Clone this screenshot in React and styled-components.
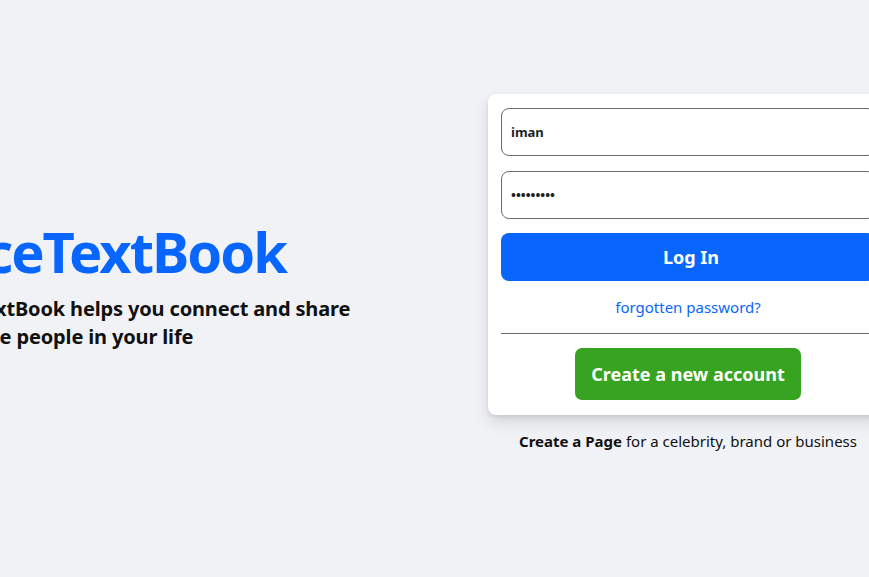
import React from 'react';
import styled, { createGlobalStyle } from 'styled-components';

const GlobalStyle = createGlobalStyle`
  html, body {
    margin: 0;
    padding: 0;
    background: #f0f2f5;
    font-family: "Noto Sans", "Open Sans", sans-serif;
    overflow: hidden;
  }
`;

const Page = styled.main`
  width: 100vw;
  height: 100vh;
  display: flex;
  justify-content: center;
  align-items: center;
  overflow: hidden;
`;

const Row = styled.div`
  flex: none;
  display: flex;
  align-items: center;
  gap: 30px;
  padding-right: 57px; /* keeps the card where the original sat */
`;

const Intro = styled.section`
  width: 534px;
  margin-top: -8px;
`;

const Brand = styled.h1`
  margin: 0 0 10px;
  color: #0866ff;
  font-size: 56px;
  font-weight: 700;
  line-height: 1.2;
  letter-spacing: -2px;
`;

const Tagline = styled.h2`
  margin: 0;
  width: 450px;
  padding-left: 5px;
  color: #111;
  font-size: 20px;
  font-weight: 700;
  line-height: 28px;
  letter-spacing: -0.15px;
`;

const Side = styled.div`
  display: flex;
  flex-direction: column;
  align-items: center;
  margin-top: -32px;
`;

const Card = styled.form`
  width: 400px;
  box-sizing: border-box;
  padding: 14px 13px 15px;
  background: #fff;
  border-radius: 8px;
  box-shadow: 0 2px 4px rgba(0, 0, 0, 0.1), 0 8px 16px rgba(0, 0, 0, 0.1);
  display: flex;
  flex-direction: column;
  align-items: center;
`;

const Input = styled.input`
  width: 100%;
  height: 48px;
  box-sizing: border-box;
  margin-bottom: 15px;
  padding: 0 9px;
  border: 1px solid #6b6b6b;
  border-radius: 8px;
  font-family: inherit;
  font-size: 13px;
  font-weight: 700;
  color: #1c1e21;
  background: #fff;
  outline: none;

  &:last-of-type {
    margin-bottom: 14px;
  }
`;

const Button = styled.button`
  border: none;
  border-radius: ${p => (p.$create ? '7px' : '8px')};
  background: ${p => (p.$create ? '#36a420' : '#0866ff')};
  color: #fff;
  font-family: inherit;
  font-weight: 700;
  cursor: pointer;
  width: ${p => (p.$create ? 'auto' : '100%')};
  height: ${p => (p.$create ? '52px' : '48px')};
  padding: ${p => (p.$create ? '0 16px' : '0 0 0 6px')};
  font-size: 18px;
`;

const Forgot = styled.a`
  margin: 15px 0 15px;
  color: #0866ff;
  font-size: 15px;
  line-height: 22px;
  text-decoration: none;
`;

const Divider = styled.hr`
  width: 100%;
  margin: 0 0 14px;
  border: none;
  border-top: 1px solid #6b6b6b;
`;

const PageNote = styled.p`
  margin: 16px 0 0;
  color: #111;
  font-size: 15px;

  & b {
    font-weight: 700;
  }
`;

export default function App() {
  return (
    <>
      <GlobalStyle />
      <Page>
        <Row>
          <Intro>
            <Brand>FaceTextBook</Brand>
            <Tagline>FaceTextBook helps you connect and share with the people in your life</Tagline>
          </Intro>
          <Side>
            <Card onSubmit={e => e.preventDefault()}>
              <Input type="text" defaultValue="iman" />
              <Input type="password" defaultValue="123456789" />
              <Button type="submit">Log In</Button>
              <Forgot href="#">forgotten password?</Forgot>
              <Divider />
              <Button type="button" $create>Create a new account</Button>
            </Card>
            <PageNote>
              <b>Create a Page</b> for a celebrity, brand or business
            </PageNote>
          </Side>
        </Row>
      </Page>
    </>
  );
}
